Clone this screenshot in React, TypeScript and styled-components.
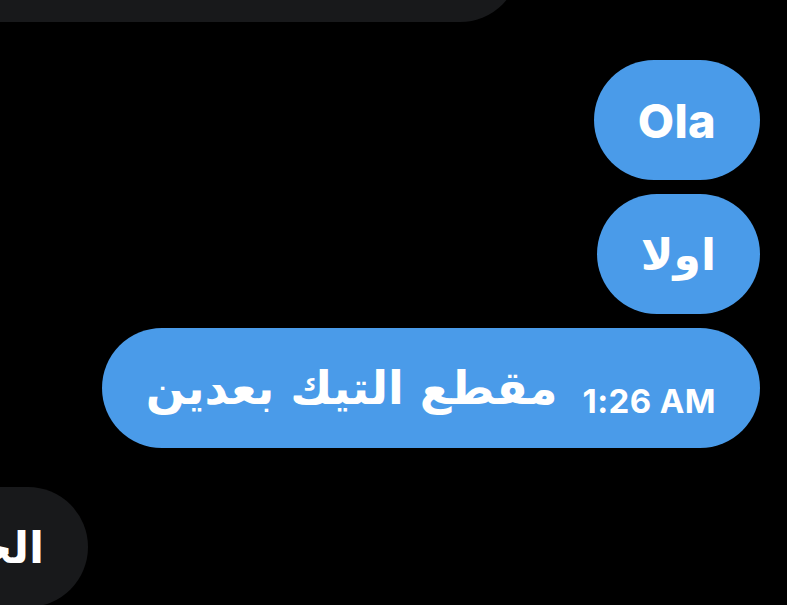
import styled, { createGlobalStyle } from "styled-components";

const GlobalStyle = createGlobalStyle`
  html, body {
    margin: 0;
    padding: 0;
    background: #000;
    overflow: hidden;
  }
`;

const Page = styled.div`
  width: 787px;
  height: 605px;
  overflow: hidden;
  display: flex;
  flex-direction: column;
  background: #000;
`;

const Bubble = styled.div<{ $incoming?: boolean }>`
  box-sizing: border-box;
  height: 120px;
  border-radius: 60px;
  display: flex;
  align-items: center;
  gap: 25px;
  padding: 0 44px;
  color: #fff;
  background: ${({ $incoming }) => ($incoming ? "#18191b" : "#4a9be9")};
  flex-shrink: 0;
`;

const TopBubble = styled(Bubble)`
  width: 580px;
  margin-top: -98px;
  margin-left: -60px;
`;

const OutgoingList = styled.div`
  display: flex;
  flex-direction: column;
  align-items: flex-end;
  gap: 14px;
  margin-top: 38px;
  padding-right: 27px;
`;

const BottomBubble = styled(Bubble)`
  width: 220px;
  margin-top: 39px;
  margin-left: -132px;
  direction: rtl;
  padding: 0 44px;
  overflow: hidden;
  white-space: nowrap;
`;

const LatinText = styled.span`
  font-family: Inter, "Liberation Sans", sans-serif;
  font-weight: 800;
  font-size: 47px;
  letter-spacing: 0.3px;
`;

const ArabicText = styled.span<{ $size?: number }>`
  font-family: "DejaVu Sans", sans-serif;
  font-weight: 700;
  font-size: ${({ $size }) => $size ?? 44}px;
  direction: rtl;
  white-space: nowrap;
`;

const Time = styled.span`
  font-family: Inter, "Liberation Sans", sans-serif;
  font-weight: 700;
  font-size: 33px;
  letter-spacing: 0.4px;
  margin-top: 26px;
  white-space: nowrap;
`;

export default function App() {
  return (
    <>
      <GlobalStyle />
      <Page>
        <TopBubble $incoming />
        <OutgoingList>
          <Bubble>
            <LatinText>Ola</LatinText>
          </Bubble>
          <Bubble>
            <ArabicText>اولا</ArabicText>
          </Bubble>
          <Bubble>
            <ArabicText $size={46}>مقطع التيك بعدين</ArabicText>
            <Time>1:26 AM</Time>
          </Bubble>
        </OutgoingList>
        <BottomBubble $incoming>
          <ArabicText>الجو</ArabicText>
        </BottomBubble>
      </Page>
    </>
  );
}
